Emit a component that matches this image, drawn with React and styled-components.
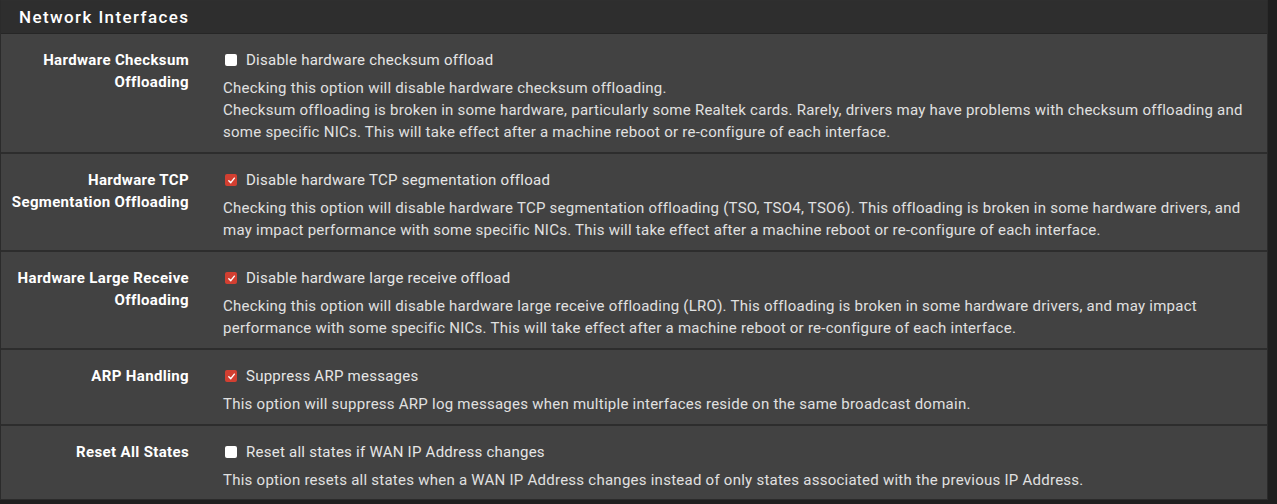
import styled, { createGlobalStyle } from "styled-components"

const Global = createGlobalStyle`
  html, body {
    margin: 0;
    padding: 0;
    background: #1f1f1f;
  }
  body {
    font-family: Roboto, "Liberation Sans", sans-serif;
    font-size: 15px;
    letter-spacing: 0.25px;
    color: #e2e2e2;
  }
`

const Panel = styled.div`
  width: 1266px;
  background: #424242;
  border: 1px solid #2b2b2b;
  border-top: 1px solid #2f2f2f;
`

const Heading = styled.div`
  height: 32px;
  display: flex;
  align-items: center;
  padding-left: 18px;
  background: #2e2e2e;
  border-bottom: 1px solid #262626;
  color: #fff;
  font-size: 17px;
  font-weight: 500;
  letter-spacing: 1.4px;
`

const Row = styled.div`
  display: grid;
  grid-template-columns: 203px 1fr;
  padding: 15px 0 9px;
  border-bottom: 2px solid #2d2d2d;
  &:last-child {
    border-bottom: none;
    padding-bottom: 8px;
  }
`

const Label = styled.div`
  text-align: right;
  padding-right: 15px;
  font-weight: 700;
  letter-spacing: 0.35px;
  color: #fff;
  line-height: 22px;
`

const Value = styled.div`
  padding: 0 15px 0 19px;
  line-height: 22px;
`

const CheckLine = styled.label`
  display: flex;
  align-items: center;
  gap: 9px;
  color: #e6e6e6;
`

const Box = styled.span`
  width: 12px;
  height: 12px;
  margin-left: 2px;
  border-radius: 2px;
  background: ${p => (p.$checked ? "#d23f31" : "#fff")};
  display: flex;
  align-items: center;
  justify-content: center;
  flex: none;
`

const Help = styled.div`
  margin-top: 6px;
  color: #e0e0e0;
`

const Check = ({ checked }) => (
  <Box $checked={checked}>
    {checked && (
      <svg width="9" height="9" viewBox="0 0 10 10">
        <path d="M2 5.2 L4.2 7.4 L8.2 2.4" fill="none" stroke="#fff" strokeWidth="1.6" strokeLinecap="round" strokeLinejoin="round" />
      </svg>
    )}
  </Box>
)

const options = [
  {
    label: ["Hardware Checksum", "Offloading"],
    checked: false,
    text: "Disable hardware checksum offload",
    help: [
      "Checking this option will disable hardware checksum offloading.",
      "Checksum offloading is broken in some hardware, particularly some Realtek cards. Rarely, drivers may have problems with checksum offloading and some specific NICs. This will take effect after a machine reboot or re-configure of each interface.",
    ],
  },
  {
    label: ["Hardware TCP", "Segmentation Offloading"],
    checked: true,
    text: "Disable hardware TCP segmentation offload",
    help: [
      "Checking this option will disable hardware TCP segmentation offloading (TSO, TSO4, TSO6). This offloading is broken in some hardware drivers, and may impact performance with some specific NICs. This will take effect after a machine reboot or re-configure of each interface.",
    ],
  },
  {
    label: ["Hardware Large Receive", "Offloading"],
    checked: true,
    text: "Disable hardware large receive offload",
    help: [
      "Checking this option will disable hardware large receive offloading (LRO). This offloading is broken in some hardware drivers, and may impact performance with some specific NICs. This will take effect after a machine reboot or re-configure of each interface.",
    ],
  },
  {
    label: ["ARP Handling"],
    checked: true,
    text: "Suppress ARP messages",
    help: [
      "This option will suppress ARP log messages when multiple interfaces reside on the same broadcast domain.",
    ],
  },
  {
    label: ["Reset All States"],
    checked: false,
    text: "Reset all states if WAN IP Address changes",
    help: [
      "This option resets all states when a WAN IP Address changes instead of only states associated with the previous IP Address.",
    ],
  },
]

const App = () => {
  return (
    <>
      <Global />
      <Panel>
        <Heading>Network Interfaces</Heading>
        {options.map(o => (
          <Row key={o.text}>
            <Label>
              {o.label.map(l => (
                <div key={l}>{l}</div>
              ))}
            </Label>
            <Value>
              <CheckLine>
                <Check checked={o.checked} />
                {o.text}
              </CheckLine>
              <Help>
                {o.help.map(h => (
                  <div key={h}>{h}</div>
                ))}
              </Help>
            </Value>
          </Row>
        ))}
      </Panel>
    </>
  )
}

export default App
